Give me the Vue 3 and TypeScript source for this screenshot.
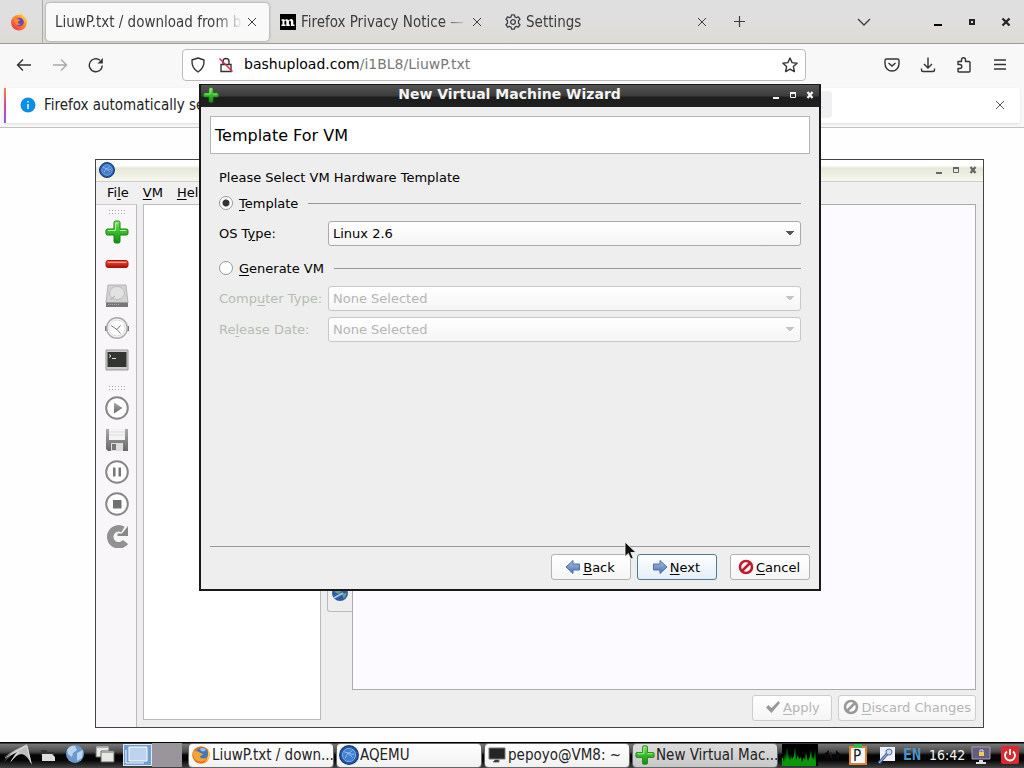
<script setup lang="ts">
import { ref } from 'vue'

interface BrowserTab { title: string; icon: string; active: boolean }
interface Task { title: string; icon: string; active: boolean }

const tabs: BrowserTab[] = [
  { title: 'LiuwP.txt / download from bashupload', icon: '', active: true },
  { title: 'Firefox Privacy Notice — Mozilla', icon: 'm', active: false },
  { title: 'Settings', icon: 'gear', active: false },
]
const tasks: Task[] = [
  { title: 'LiuwP.txt / down...', icon: 'fox', active: false },
  { title: 'AQEMU', icon: 'aqemu', active: false },
  { title: 'pepoyo@VM8: ~', icon: 'term', active: false },
  { title: 'New Virtual Mac...', icon: 'plus', active: true },
]
const mode = ref('template')
const osType = ref('Linux 2.6')
</script>

<template>
  <div class="screen">
    <svg class="defs" width="0" height="0" aria-hidden="true">
      <defs>
        <linearGradient id="green" x1="0" y1="0" x2="0" y2="1">
          <stop offset="0" stop-color="#8be070" /><stop offset=".45" stop-color="#3cc02e" /><stop offset="1" stop-color="#158a10" />
        </linearGradient>
        <linearGradient id="red" x1="0" y1="0" x2="0" y2="1">
          <stop offset="0" stop-color="#f0705c" /><stop offset=".5" stop-color="#dd2a1c" /><stop offset="1" stop-color="#a01008" />
        </linearGradient>
        <linearGradient id="blue" x1="0" y1="0" x2="0" y2="1">
          <stop offset="0" stop-color="#a9c0e4" /><stop offset="1" stop-color="#4a70b4" />
        </linearGradient>
        <linearGradient id="gray" x1="0" y1="0" x2="0" y2="1">
          <stop offset="0" stop-color="#a8a8a8" /><stop offset="1" stop-color="#686868" />
        </linearGradient>
        <linearGradient id="fox" x1="1" y1="0" x2="0" y2="1">
          <stop offset="0" stop-color="#ffd83a" /><stop offset=".5" stop-color="#ff7a2a" /><stop offset="1" stop-color="#e8265a" />
        </linearGradient>
        <symbol id="i-plus" viewBox="0 0 24 24">
          <path d="M9 2.500q0-1.500 1.500-1.500h3q1.500 0 1.500 1.500V9h6.500Q23 9 23 10.500v3q0 1.500-1.500 1.500H15v6.500q0 1.500-1.500 1.500h-3Q9 23 9 21.500V15H2.500Q1 15 1 13.500v-3Q1 9 2.500 9H9z" fill="url(#green)" stroke="#15850f" />
          <path d="M10.500 10.500V3h2M3 10.500h7.500M15 10.500h6" fill="none" stroke="#b4f29b" />
        </symbol>
        <symbol id="i-aqemu" viewBox="0 0 16 16">
          <circle cx="8" cy="8" r="7.500" fill="#2459a5" stroke="#173c74" />
          <circle cx="8" cy="8" r="5.300" fill="#3f7fce" stroke="#8db8ec" stroke-width=".7" />
          <path d="M4 5.500l4 1 3-2.500M5 10.500l2-4 4 3.500M7 6.500q3 1 5 1" fill="none" stroke="#9cc4f0" stroke-width=".7" />
        </symbol>
        <symbol id="i-fox" viewBox="0 0 16 16">
          <circle cx="8" cy="8.500" r="7" fill="url(#fox)" />
          <path d="M9 0c2 1 2.500 3 3.500 4 1.500-.2 3 3 2.500 5l-4-4z" fill="#ffc42e" />
          <circle cx="8.500" cy="8" r="3.800" fill="#7043b8" />
          <path d="M2 4c1 .3 3 .3 4 1.200l3 .7c0 1-2 1.200-2 2.300s1.500 1.800 3 1.200c-1 2-5 1.600-6-1z" fill="#ff8a2b" />
        </symbol>
        <symbol id="i-foxglobe" viewBox="0 0 20 20">
          <circle cx="10" cy="10" r="8.800" fill="#e8751a" />
          <circle cx="11" cy="8.500" r="6" fill="#3f76bd" />
          <path d="M9 3.500q4-1.500 6 1l-2 2-3-.5z" fill="#9cc4ea" />
          <path d="M2 5q1 1.500 3 1.200 2-.2 3.500 1.300L12 9q0 1.500-3 2 0 2.500 3 2.500 2 0 3.500-1.500-1 4.500-6 4.500-6 0-7.500-7z" fill="#f6a433" />
          <path d="M17 4q2 3 1.700 7-1.500 5-6 7.300 4.500-4.300 4.300-9z" fill="#fbcf4f" />
        </symbol>
        <symbol id="i-no" viewBox="0 0 16 16">
          <circle cx="8" cy="8" r="6" fill="#fff" fill-opacity=".7" stroke="currentColor" stroke-width="2.600" />
          <path d="M4 12l8-8" stroke="currentColor" stroke-width="2.500" />
        </symbol>
        <symbol id="i-x" viewBox="0 0 10 10"><path d="M1 1l8 8M9 1l-8 8" stroke="currentColor" fill="none" /></symbol>
        <symbol id="i-wc" viewBox="0 0 44 10">
          <path d="M1 7h6v2H1z" fill="currentColor" />
          <path d="M18.500 2.500h5v5h-5z" stroke="currentColor" fill="none" />
          <path d="M18 2h6v2h-6z" fill="currentColor" />
          <path d="M35.500 2l5 6M40.500 2l-5 6" stroke="currentColor" stroke-width="2.300" />
        </symbol>
      </defs>
    </svg>

    <main class="browser">
      <header class="tabbar">
        <div class="pinned"><svg width="18" height="18"><use href="#i-fox" /></svg></div>
        <div v-for="t in tabs" :key="t.title" class="tab" :class="{ active: t.active }">
          <svg v-if="t.icon === 'm'" class="favicon" width="16" height="16" viewBox="0 0 16 16"><rect width="16" height="16" /><path d="M1.500 5.300h3v1Q6.800 4 8.700 6.300 12.500 3.500 13.300 7v3.600h1.200V12h-3.600V7.500q-1-2-2 0v3.100h1V12H6.300V7.500q-.8-2-1.900 0v3.100h1.200V12H1.500v-1.400h1V6.800h-1z" fill="#fff" /></svg>
          <svg v-else-if="t.icon === 'gear'" class="favicon" width="16" height="16" viewBox="0 0 16 16" fill="none" stroke="#3f3f45" stroke-width="1.300"><path d="M6.600.8h2.800l.5 2.100 1.500.8 2-.8 1.600 2.400-1.500 1.500v2.400l1.500 1.500-1.600 2.400-2-.7-1.500.8-.5 2H6.600l-.5-2-1.500-.8-2 .7L1 10.700l1.500-1.500V6.800L1 5.300l1.600-2.400 2 .8 1.500-.8z" stroke-linejoin="round" /><circle cx="8" cy="8" r="2.300" /></svg>
          <span class="tabtitle">{{ t.title }}</span>
          <button class="plain" aria-label="Close tab"><svg width="10" height="10"><use href="#i-x" /></svg></button>
        </div>
        <button class="plain newtab" aria-label="New tab"><svg width="13" height="13" viewBox="0 0 13 13"><path d="M6.500 1v11M1 6.500h11" stroke="currentColor" stroke-width="1.200" /></svg></button>
        <span class="grow"></span>
        <button class="plain alltabs" aria-label="List all tabs"><svg width="14" height="8" viewBox="0 0 14 8"><path d="M1 1l6 6 6-6" stroke="currentColor" stroke-width="1.300" fill="none" /></svg></button>
        <div class="ffwin">
          <button class="plain" aria-label="Minimize"><svg width="10" height="10"><path d="M1 7h8v2H1z" /></svg></button>
          <button class="plain" aria-label="Maximize"><svg width="10" height="10"><path d="M3 3h4v4H3z" fill="none" stroke="#222" stroke-width="2" /></svg></button>
          <button class="plain" aria-label="Close"><svg width="10" height="10"><path d="M1.500 1.500l7 7M8.500 1.500l-7 7" stroke="#222" stroke-width="2.200" /></svg></button>
        </div>
      </header>

      <nav class="navbar">
        <button class="plain nb" aria-label="Back"><svg width="16" height="16" viewBox="0 0 16 16"><path d="M15 8H1.500M7 2.500L1.500 8 7 13.500" /></svg></button>
        <button class="plain nb dim" aria-label="Forward" disabled><svg width="16" height="16" viewBox="0 0 16 16"><path d="M1 8h13.500M9 2.500L14.500 8 9 13.500" /></svg></button>
        <button class="plain nb" aria-label="Reload"><svg width="16" height="16" viewBox="0 0 16 16"><path d="M14.300 8.500A6.500 6.500 0 1 1 12 3.300" /><path d="M14.800 1v5.500H9.500z" fill="#333" stroke="none" /></svg></button>
        <div class="urlbar">
          <svg class="line" width="16" height="16" viewBox="0 0 16 16"><path d="M8 1l6 2c.3 4.500-1 9-6 12-5-3-6.300-7.500-6-12z" stroke-linejoin="round" /></svg>
          <svg class="line" width="16" height="16" viewBox="0 0 16 16"><path d="M5 7V4.500a3 3 0 0 1 6 0V7M3 7.500h10v7H3z" /><path d="M1.500 1.500l13 13" stroke="#e22850" stroke-width="1.500" /></svg>
          <span class="url">bashupload.com<i>/i1BL8/LiuwP.txt</i></span>
          <button class="plain" aria-label="Bookmark"><svg class="line" width="16" height="16" viewBox="0 0 16 16"><path d="M8 1l2.100 4.600 5 .6-3.700 3.400 1 5L8 12.100l-4.400 2.500 1-5L.9 6.200l5-.6z" stroke-linejoin="round" /></svg></button>
        </div>
        <button class="plain nb" aria-label="Pocket"><svg width="16" height="16" viewBox="0 0 16 16"><path d="M2.500 2h11q1.500 0 1.500 1.500V7A7 7 0 0 1 1 7V3.500Q1 2 2.500 2zM4.500 6L8 9l3.500-3" /></svg></button>
        <button class="plain nb" aria-label="Downloads"><svg width="16" height="16" viewBox="0 0 16 16"><path d="M8 .5v10.300M4 7l4 4 4-4M1.500 11.500v1.500q0 1.500 1.500 1.500h10q1.500 0 1.500-1.500v-1.500" /></svg></button>
        <button class="plain nb" aria-label="Extensions"><svg width="16" height="16" viewBox="0 0 16 16"><path d="M2 7.500V4.500h3.500V2.700a2 2 0 0 1 4 0v1.800H13q1 0 1 1V14q0 1-1 1H3q-1 0-1-1v-2.500h1.800a2 2 0 0 0 0-4z" stroke-linejoin="round" /></svg></button>
        <button class="plain nb" aria-label="Menu"><svg width="16" height="16" viewBox="0 0 16 16"><path d="M2 3h12M2 7.500h12M2 12h12" /></svg></button>
      </nav>

      <section class="noticebar">
        <div class="notice">
          <svg width="16" height="16" viewBox="0 0 16 16"><circle cx="8" cy="8" r="7.500" fill="#0a8ee6" /><path d="M8 7v5M8 4v1.500" stroke="#fff" stroke-width="1.400" /></svg>
          <span>Firefox automatically sends some data to Mozilla</span>
          <button class="share">Choose What I Share</button>
          <button class="plain" aria-label="Dismiss"><svg width="10" height="10"><use href="#i-x" /></svg></button>
        </div>
      </section>
    </main>

    <section class="aqemu" aria-label="AQEMU">
      <div class="atitle"><svg width="16" height="16"><use href="#i-aqemu" /></svg><svg width="44" height="10"><use href="#i-wc" /></svg></div>
      <div class="amenu"><button class="plain">Fi<u>l</u>e</button><button class="plain"><u>V</u>M</button><button class="plain"><u>H</u>elp</button></div>
      <div class="abody">
        <div class="tools">
          <span class="grip"></span>
          <button class="plain" aria-label="Add VM"><svg width="24" height="24"><use href="#i-plus" /></svg></button>
          <button class="plain" aria-label="Delete VM"><svg width="24" height="24" viewBox="0 0 24 24"><rect x="1" y="8.500" width="22" height="7" rx="2" fill="url(#red)" stroke="#a2180f" /><path d="M3 10.500h18" stroke="#ff9d8c" /></svg></button>
          <button class="plain" aria-label="Hard disk"><svg width="24" height="24" viewBox="0 0 24 24"><path d="M3 1h18l2 18H1z" fill="#d2d2d2" stroke="#b4b4b4" /><ellipse cx="12" cy="9" rx="7.500" ry="6.500" fill="#e2e2e2" stroke="#bdbdbd" /><path d="M5 16l5-4" stroke="#aaa" /><path d="M1 18.500h22V23H1z" fill="#777" /><path d="M3 20.500h11" stroke="#aaa" stroke-dasharray="1 1" /></svg></button>
          <button class="plain" aria-label="Clock"><svg width="24" height="24" viewBox="0 0 24 24"><path d="M1 10v5M23 10v5" stroke="#777" stroke-width="2" /><circle cx="12" cy="12" r="10.300" fill="#f6f6f6" stroke="#aaa" stroke-width="1.500" /><circle cx="12" cy="12" r="8" fill="#fff" stroke="#ddd" /><path d="M6 9.500l6 4 3.500-4M12 13.500l3.500 4" fill="none" stroke="#777" /></svg></button>
          <button class="plain" aria-label="Console"><svg width="24" height="24" viewBox="0 0 24 24"><path d="M1 2h22v20H1z" fill="#ccc" stroke="#999" /><path d="M2.500 4h19v15h-19z" fill="#333533" /><path d="M4 6.500l2 1.500-2 1.500M7 10.500h4" stroke="#ddd" fill="none" /></svg></button>
          <span class="grip second"></span>
          <button class="plain" aria-label="Start"><svg class="round" width="24" height="24" viewBox="0 0 24 24"><circle cx="12" cy="12" r="10.800" /><path d="M9 6.500v11l8.500-5.500z" fill="url(#gray)" /></svg></button>
          <button class="plain" aria-label="Save"><svg width="24" height="24" viewBox="0 0 24 24"><path d="M1 1h22v22H3l-2-2z" fill="url(#gray)" /><path d="M4 1h16v11H4z" fill="#f4f4f4" /><path d="M4 4h16M4 7h16" stroke="#ddd" /><path d="M6 15h12v8H6z" fill="#ddd" /><path d="M7 16h4v6H7z" fill="#777" /></svg></button>
          <button class="plain" aria-label="Pause"><svg class="round" width="24" height="24" viewBox="0 0 24 24"><circle cx="12" cy="12" r="10.800" /><path d="M8 7.500h2.500v9H8zM13.500 7.500H16v9h-2.500z" fill="#777" /></svg></button>
          <button class="plain" aria-label="Stop"><svg class="round" width="24" height="24" viewBox="0 0 24 24"><circle cx="12" cy="12" r="10.800" /><path d="M8 8h8.500v8.500H8z" fill="#707070" /></svg></button>
          <button class="plain" aria-label="Reset"><svg width="24" height="24" viewBox="0 0 24 24"><path d="M20.500 18A8.500 8.500 0 1 1 18 5.500" fill="none" stroke="#919191" stroke-width="6.500" /><path d="M23 2v10H12.500V9.500h4.500z" fill="#888" /></svg></button>
        </div>
        <div class="vmlist"></div>
        <div class="tabwell"><div class="sidetab"><svg width="18" height="18" viewBox="0 0 18 18"><circle cx="9" cy="9" r="8" fill="#315d9f" /><path d="M2 5q6-4 10 0l-4 5-3-1zM11 10l5-1-3 6z" fill="#6a9f8c" /><path d="M3 14l9-5" stroke="#a6c6ec" stroke-width="2" /></svg></div></div>
        <div class="details">
          <div class="panel"></div>
          <div class="aactions">
            <button class="qbtn" disabled><svg width="16" height="16" viewBox="0 0 16 16"><path d="M1 8.500L3.500 6 6.500 9 13.500 2 15 4 6.500 14z" fill="#999" /></svg><span><u>A</u>pply</span></button>
            <button class="qbtn" disabled><svg width="16" height="16"><use href="#i-no" /></svg><span><u>D</u>iscard Changes</span></button>
          </div>
        </div>
      </div>
    </section>

    <form class="wizard" @submit.prevent>
      <div class="wtitle"><svg width="16" height="16"><use href="#i-plus" /></svg><h1>New Virtual Machine Wizard</h1><svg width="44" height="10"><use href="#i-wc" /></svg></div>
      <h2>Template For VM</h2>
      <div class="wbody">
        <p>Please Select VM Hardware Template</p>
        <div class="choice"><input id="r1" v-model="mode" type="radio" value="template" name="mode"><label for="r1"><u>T</u>emplate</label><span class="rule"></span></div>
        <div class="field"><label for="os">OS T<u>y</u>pe:</label><select id="os" v-model="osType"><option>Linux 2.6</option></select></div>
        <div class="choice gen"><input id="r2" v-model="mode" type="radio" value="generate" name="mode"><label for="r2"><u>G</u>enerate VM</label><span class="rule"></span></div>
        <div class="field off"><label for="ct">Comp<u>u</u>ter Type:</label><select id="ct" disabled><option>None Selected</option></select></div>
        <div class="field off"><label for="rd">Re<u>l</u>ease Date:</label><select id="rd" disabled><option>None Selected</option></select></div>
      </div>
      <div class="wactions">
        <button type="button" class="qbtn"><svg width="16" height="16" viewBox="0 0 16 16"><path d="M1 8l7-6.500V5h6.500v6H8v3.500z" fill="url(#blue)" stroke="#4c6ea4" /></svg><span><u>B</u>ack</span></button>
        <button type="submit" class="qbtn default"><svg width="16" height="16" viewBox="0 0 16 16"><path d="M15 8L8 1.500V5H1.500v6H8v3.500z" fill="url(#blue)" stroke="#4c6ea4" /></svg><span><u>N</u>ext</span></button>
        <button type="button" class="qbtn cancel"><svg width="16" height="16"><use href="#i-no" /></svg><span><u>C</u>ancel</span></button>
      </div>
    </form>

    <svg class="cursor" width="14" height="20" viewBox="0 0 14 20"><path d="M1 1v14.500l3.300-3 2.500 5.500 2.400-1.100-2.400-5.400H12z" fill="#111" stroke="#f8f8f8" stroke-width=".8" /></svg>

    <footer class="taskbar">
      <div class="launch">
        <svg width="34" height="24" viewBox="0 0 34 24"><path d="M4 14Q16 6 27 1L32 22Q27 12 22 11 16 11 10 20 14 12 17 9 11 11 4 19 9 12 13 10z" fill="#bdbdbd" /><path d="M5 15L26 3M11 18l8-9M27 3l4 17" stroke="#eee" stroke-width=".8" fill="none" /></svg>
        <svg width="28" height="24" viewBox="0 0 28 24"><path d="M7 7h5l2 2h6v3H7z" fill="#333" /><path d="M8 11h10l3 3v4H8z" fill="#ddd" /></svg>
        <svg width="26" height="24" viewBox="0 0 26 24"><circle cx="13" cy="11" r="9" fill="#6c98cd" /><path d="M5 7q3-5 8-4l2 4-4 3-1 4-4-3zM15 10l6-3-1 8-5 3z" fill="#b9d5f0" /></svg>
        <svg width="34" height="24" viewBox="0 0 34 24" fill="#e6e8e4" stroke="#666"><path d="M8 3h13v11H8z" /><path d="M13 8h13v11H13z" /><path d="M9 4.500h11M14 9.500h11" stroke="#aaa" /></svg>
      </div>
      <div class="pager">
        <svg width="29" height="22" viewBox="0 0 29 22"><path d="M0 0h29v22H0z" fill="#729fcf" /><path d="M.5.500h28v21H.5z" fill="none" stroke="#dfeaf7" /><path d="M6 3h18v14H6z" fill="#bdd3f0" stroke="#fff" /><path d="M3 6v13h18" fill="none" stroke="#fff" /></svg><span></span>
      </div>
      <div class="tasks">
        <button v-for="t in tasks" :key="t.title" class="task" :class="{ current: t.active }">
          <svg v-if="t.icon === 'term'" width="20" height="20" viewBox="0 0 20 20"><path d="M2 3h16v11H2z" fill="#252525" stroke="#777" /><path d="M8 15h4v2H6" stroke="#777" /></svg>
          <svg v-else-if="t.icon === 'fox'" width="20" height="20"><use href="#i-foxglobe" /></svg>
          <svg v-else width="20" height="20"><use :href="'#i-' + t.icon" /></svg>
          <span>{{ t.title }}</span>
        </button>
      </div>
      <div class="tray">
        <svg width="36" height="22" viewBox="0 0 36 22"><path d="M0 0h36v22H0z" /><path d="M0 22V14l1-1 1 5 1-9 1 7 1-13 1 12 1-5 1 7 1-6 1 4 2-3 1-9 1 13 2-5 1 4 2-2 1 5 2-5 1 3 1-8 1 6 1 3 2-5 1-6 1 9 1-3 1 4 1-10 1 12v6z" fill="#0a980a" /></svg>
        <svg width="30" height="22" viewBox="0 0 30 22"><path d="M5 11l6-5v10zM18 6l5 5-5 5z" fill="#0a0a0a" /><path d="M13 8v6" stroke="#222" /></svg>
        <svg class="clip" width="20" height="22" viewBox="0 0 20 22"><path d="M1 2h18v19H1z" fill="#df842c" /><path d="M3 4h14v15H3z" fill="#f4faff" /><path d="M6 0h8v4H6z" fill="#39b84d" /><text x="5" y="17">P</text></svg>
        <svg class="pen" width="20" height="22" viewBox="0 0 20 22"><path d="M4 3h15v14H4z" fill="#eef2fb" /><path d="M3 19l8-9" stroke="#4b64a4" stroke-width="3" /><path d="M3 19l8-9" stroke="#b5c4ec" /><circle cx="13" cy="8" r="3" fill="#cdd9f6" stroke="#4b64a4" /></svg>
        <span class="lang">EN</span><time>16:42</time>
        <svg width="20" height="22" viewBox="0 0 20 22"><path d="M1 3h18v12H1z" fill="#665c80" stroke="#a6a0b4" /><path d="M8 8h5v4H8z" fill="#f0cc50" /><path d="M9 8V6h3v2" stroke="#ddd" fill="none" /><path d="M8 16h4v2h3v2H5v-2h3z" fill="#ddd" /></svg>
        <svg class="power" width="18" height="18" viewBox="0 0 18 18"><rect width="18" height="18" rx="2" fill="#d82a30" /><path d="M6 5.500a5 5 0 1 0 6 0M9 3v6" stroke="#fff" stroke-width="1.800" fill="none" /></svg>
      </div>
    </footer>
  </div>
</template>

<style>
html, body { margin: 0; background: #fff; }
</style>

<style scoped>
* { box-sizing: border-box; }
.screen { position: relative; height: 100vh; display: flex; flex-direction: column; overflow: hidden; background: #fefefe; font-family: "DejaVu Sans", sans-serif; font-size: 13px; color: #000; }
.defs { position: absolute; }
svg { display: block; flex: none; }
button, select { font: inherit; color: inherit; }
.plain { border: 0; background: none; padding: 0; display: flex; align-items: center; justify-content: center; }
.grow { flex: 1; }
.browser { flex: 1; font-family: "DejaVu Sans Condensed", "DejaVu Sans", sans-serif; font-size: 15px; }

.tabbar { height: 44px; display: flex; align-items: center; gap: 2px; background: linear-gradient(#dfdfdf 0 45%, #dddad3); border-bottom: 1px solid #9b9b97; color: #3c3c3c; }
.pinned { width: 43px; height: 43px; padding-right: 4px; margin-right: 1px; display: flex; align-items: center; justify-content: center; border-right: 1px solid #aaa; }
.tab { width: 223px; height: 38px; padding: 0 12px 0 9px; display: flex; align-items: center; border-radius: 4px; }
.tab.active { background: #f9f9f9; box-shadow: 0 0 3px #888; }
.favicon { margin-right: 5px; }
.tabtitle { flex: 1; min-width: 0; margin-right: 4px; white-space: nowrap; overflow: hidden; mask-image: linear-gradient(to right, #000 85%, transparent); }
.newtab { margin-left: 12px; }
.alltabs { margin-right: 60px; }
.ffwin { display: flex; gap: 24px; margin-right: 13px; }

.navbar { height: 41px; padding: 0 6px; display: flex; align-items: center; background: #f8f8f8; }
.nb { width: 36px; height: 36px; }
.nb svg, .line { fill: none; stroke: #333; stroke-width: 1.400; }
.dim { opacity: .4; }
.urlbar { flex: 1; height: 32px; margin: 0 68px; padding: 0 7px; display: flex; align-items: center; gap: 12px; background: #fff; border: 1px solid #bbb; border-radius: 4px; }
.url { flex: 1; margin-left: -2px; padding-bottom: 2px; font-family: "DejaVu Sans", sans-serif; font-size: 14px; }
.url i { font-style: normal; color: #777; }

.noticebar { height: 43px; padding: 3px 4px 4px; background: #f8f8f8; border-bottom: 1px solid #c2c2c2; }
.notice { height: 35px; padding: 0 15px 2px 14px; display: flex; align-items: center; gap: 8px; background: #fff; border-left: 2px solid; border-image: linear-gradient(#f58a3c, #d04aa0, #9059e0) 1; box-shadow: 0 1px 2px #ddd; white-space: nowrap; color: #222; }
.share { height: 27px; padding: 0 20px; margin: 0 155px 0 auto; border: 0; border-radius: 4px; background: #f0f0f2; }
.notice .plain { color: #555; }

.aqemu { position: absolute; left: 95px; top: 159px; right: 40px; bottom: 40px; display: flex; flex-direction: column; background: #eee; border: 1px solid #444; }
.atitle { height: 22px; padding: 0 4px 2px 3px; display: flex; align-items: center; justify-content: space-between; background: linear-gradient(#fff 0 25%, #e6e8d8 40%, #f7f7ee); border-bottom: 1px solid #ccc; color: #666; }
.amenu { height: 22px; padding: 0 0 2px 11px; display: flex; gap: 14px; align-items: center; background: #f0f0f0; }
.abody { flex: 1; min-height: 0; display: flex; }
.tools { width: 41px; padding-left: 2px; display: flex; flex-direction: column; align-items: center; background: #f8f6f8; border-right: 1px solid #bbb; border-top: 1px solid #ccc; }
.tools .plain { height: 32px; }
.grip { width: 18px; height: 5px; margin: 4px 0 2px; background: radial-gradient(circle, #aaa 1px, transparent 1px) 0 0 / 3px 3px; }
.grip.second { margin: 9px 0 2px; }
.round { fill: #fff; stroke: #888; stroke-width: 2; }
.round path { stroke: none; }
.vmlist { width: 178px; margin: 0 6px 7px; background: #fff; border: 1px solid #bbb; }
.tabwell { width: 25px; }
.sidetab { height: 408px; padding: 0 0 9px 3px; display: flex; align-items: flex-end; border: 1px solid #bbb; border-right: 0; border-radius: 0 0 0 3px; }
.details { flex: 1; margin-right: 7px; display: flex; flex-direction: column; }
.panel { flex: 1; background: #fcfaff; border: 1px solid #aaa; }
.aactions { display: flex; justify-content: flex-end; gap: 6px; padding: 5px 0 6px; }

.qbtn { min-width: 80px; height: 26px; padding: 0 6px 0 4px; display: flex; align-items: center; justify-content: center; gap: 2px; white-space: nowrap; border: 1px solid #b2b2b2; border-radius: 3px; background: linear-gradient(#fff, #f5f5f5); }
.qbtn:disabled { padding: 0 4px 2px; color: #b5b5b5; border-color: #ccc; }
.qbtn:disabled svg { color: #999; }
u { text-underline-offset: 2px; }

.wizard { position: absolute; left: 199px; right: 203px; top: 84px; background: #eee; border: 2px solid #191919; border-top-width: 1px; }
.wtitle { height: 22px; padding: 0 3px 2px 2px; display: flex; align-items: center; background: linear-gradient(#555 0, #3b3b3b 50%, #1d1d1d 55%, #202020); color: #f4f4f4; }
h1 { flex: 1; margin: 0 0 2px 28px; text-align: center; font: bold 14px/18px "DejaVu Sans", sans-serif; }
h2 { height: 38px; margin: 9px 9px 0; padding: 0 4px; display: flex; align-items: center; background: #fff; border: 1px solid #b5b5b5; font-size: 16px; font-weight: normal; }
.wbody { height: 393px; margin: 0 9px; padding: 15px 9px 0; border-bottom: 1px solid #999; }
p { margin: 0; line-height: 18px; }
.choice { height: 18px; margin-top: 7px; display: flex; align-items: center; gap: 6px; }
.choice.gen { margin: 13px 0 9px; }
.choice input { appearance: none; width: 14px; height: 14px; margin: 0; border: 1px solid #999; border-radius: 50%; background: #fff; }
.choice input:checked { background: radial-gradient(circle, #333 0 3px, #fff 4px); }
.rule { flex: 1; height: 1px; margin-left: 4px; background: #999; }
.field { height: 25px; display: flex; align-items: center; }
.choice:not(.gen) + .field { margin-top: 9px; }
.field + .field { margin-top: 6px; }
.field label { width: 109px; }
select { --arrow: #555; flex: 1; height: 25px; padding: 0 4px; appearance: none; border: 1px solid #aaa; border-radius: 3px; background: linear-gradient(to top right, transparent 50%, var(--arrow) 51%) right 10px center / 5px 5px no-repeat, linear-gradient(to top left, transparent 50%, var(--arrow) 51%) right 5px center / 5px 5px no-repeat, linear-gradient(#fff, #f5f5f5); }
.off { color: #b5bdb2; }
.off select { --arrow: #c4c4c4; color: #b5b5b5; opacity: 1; border-color: #c8c8c8; }
.wactions { padding: 7px 9px 9px; display: flex; justify-content: flex-end; gap: 6px; }
.default { border-color: #4a7c90; background: linear-gradient(#fff, #e4eefa); }
.cancel { margin-left: 7px; }
.cancel svg { color: #c01c2c; }
.cursor { position: absolute; left: 624px; top: 541px; }

.taskbar { height: 26px; display: flex; align-items: center; background: linear-gradient(#000 0 1px, #777 2px, #484848 10px, #050505 13px, #050505 18px, #444); font-family: "DejaVu Sans Condensed", "DejaVu Sans", sans-serif; font-size: 15px; }
.launch { display: flex; }
.pager { display: flex; align-items: center; margin: 0 6px 0 1px; }
.pager span { width: 30px; height: 24px; background: #99959a; }
.tasks { flex: 1; display: flex; gap: 2px; min-width: 0; }
.task { flex: 1; min-width: 0; height: 25px; padding: 0 2px 1px; display: flex; align-items: center; gap: 1px; white-space: nowrap; overflow: hidden; border: 1px solid #666; border-radius: 4px; background: linear-gradient(#fff, #f1f1f1); color: #222; }
.task.current { background: linear-gradient(#ddd, #c8c8c8); }
.tray { display: flex; align-items: center; margin-left: 4px; color: #f4f4f4; padding-right: 5px; }
.clip text { font-size: 15px; fill: #111; }
.pen { margin: 0 7px 0 8px; }
.lang { width: 26px; color: #4b94c8; font-family: "DejaVu Sans Mono", monospace; font-weight: bold; }
time { width: 42px; font-size: 14px; }
.power { margin-left: 10px; }
</style>
